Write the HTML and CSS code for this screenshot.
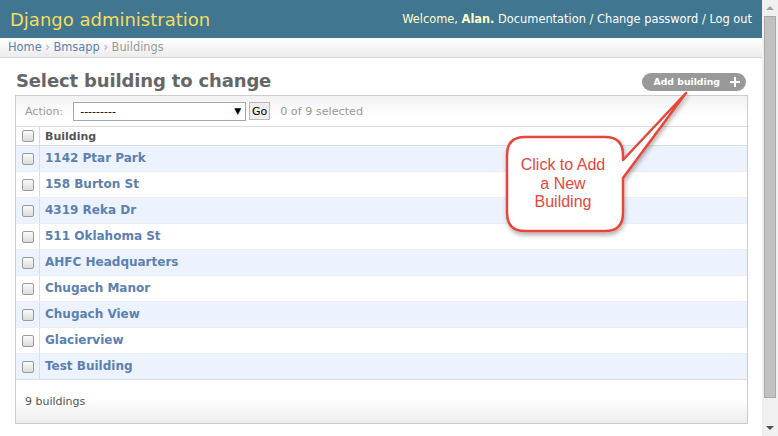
FILE: index.html
```html
<!DOCTYPE html>
<html>
<head>
<meta charset="utf-8">
<link rel="stylesheet" href="styles.css">
</head>
<body>
<div class="page">
  <div class="header">
    <div class="branding">Django administration</div>
    <div class="user-tools">Welcome, <strong>Alan.</strong> <a>Documentation</a> / <a>Change password</a> / <a>Log out</a></div>
  </div>
  <div class="breadcrumbs"><a>Home</a> <span class="sep">›</span> <a>Bmsapp</a> <span class="sep">›</span> <span class="cur">Buildings</span></div>
  <div class="content">
    <div class="title-row">
      <h1>Select building to change</h1>
      <a class="addlink">Add building <span class="plus"></span></a>
    </div>
    <div class="module">
      <div class="actions">
        <span class="label">Action:</span>
        <span class="select"><span>---------</span><span class="arrow">▼</span></span>
        <span class="go">Go</span>
        <span class="counter">0 of 9 selected</span>
      </div>
      <div class="row head"><div class="cb"><span class="check"></span></div><div class="name">Building</div></div>
      <div class="row odd"><div class="cb"><span class="check"></span></div><div class="name"><a>1142 Ptar Park</a></div></div>
      <div class="row"><div class="cb"><span class="check"></span></div><div class="name"><a>158 Burton St</a></div></div>
      <div class="row odd"><div class="cb"><span class="check"></span></div><div class="name"><a>4319 Reka Dr</a></div></div>
      <div class="row"><div class="cb"><span class="check"></span></div><div class="name"><a>511 Oklahoma St</a></div></div>
      <div class="row odd"><div class="cb"><span class="check"></span></div><div class="name"><a>AHFC Headquarters</a></div></div>
      <div class="row"><div class="cb"><span class="check"></span></div><div class="name"><a>Chugach Manor</a></div></div>
      <div class="row odd"><div class="cb"><span class="check"></span></div><div class="name"><a>Chugach View</a></div></div>
      <div class="row"><div class="cb"><span class="check"></span></div><div class="name"><a>Glacierview</a></div></div>
      <div class="row odd last"><div class="cb"><span class="check"></span></div><div class="name"><a>Test Building</a></div></div>
      <div class="paginator">9 buildings</div>
    </div>
  </div>
  <div class="callout">
    <svg class="bubble" width="200" height="160" viewBox="0 0 200 160">
      <defs>
        <filter id="sh" x="-20%" y="-20%" width="140%" height="140%">
          <feDropShadow dx="1" dy="3" stdDeviation="2" flood-color="#000" flood-opacity="0.3"/>
        </filter>
      </defs>
      <path filter="url(#sh)" d="M25 49 H105 Q123 49 123 67 V72 L186 5 L123 90 V125 Q123 143 105 143 H25 Q7 143 7 125 V67 Q7 49 25 49 Z" fill="#fff" stroke="#e5473d" stroke-width="2.5" stroke-linejoin="round"/>
    </svg>
    <div class="callout-text">Click to Add<br>a New<br>Building</div>
  </div>
</div>
<div class="scrollbar">
  <span class="arr up"></span>
  <span class="thumb"></span>
  <span class="arr down"></span>
</div>
</body>
</html>
```
FILE: styles.css
```css
html, body { margin: 0; padding: 0; }
body {
  display: flex;
  width: 778px;
  height: 436px;
  overflow: hidden;
  font-family: "DejaVu Sans", Verdana, sans-serif;
  background: #fff;
  color: #333;
}
.page { flex: 1; position: relative; min-width: 0; }
a { text-decoration: none; cursor: pointer; }

.header {
  height: 38px;
  background: #417690;
  display: flex;
  align-items: center;
  justify-content: space-between;
  padding: 0 10px;
}
.branding { color: #f5dd5d; font-size: 18px; }
.user-tools { color: #ffc; font-size: 11.4px; }
.user-tools strong { font-weight: bold; }
.user-tools a { color: #fff; }

.breadcrumbs {
  height: 19px;
  line-height: 19px;
  padding: 0 8px;
  font-size: 11.4px;
  background: linear-gradient(#fff, #ececec);
  border-bottom: 1px solid #d6d6d6;
  color: #999;
}
.breadcrumbs a { color: #5b80b2; }
.breadcrumbs .sep { color: #aaa; }
.breadcrumbs .cur { color: #999; }

.content { padding: 8px 14px 0 15px; }
.title-row {
  height: 29px;
  display: flex;
  align-items: center;
  justify-content: space-between;
}
h1 {
  margin: 0 0 0 1px;
  font-size: 18px;
  letter-spacing: -0.15px;
  font-weight: bold;
  color: #666;
}
.addlink {
  display: flex;
  align-items: center;
  height: 18px;
  margin-right: 2px;
  margin-top: 2px;
  padding: 0 6px 0 11px;
  border-radius: 9px;
  background: #999;
  color: #fff;
  font-size: 9.3px;
  font-weight: bold;
}
.plus {
  position: relative;
  width: 10px;
  height: 10px;
  margin-left: 10px;
}
.plus::before, .plus::after {
  content: "";
  position: absolute;
  background: #fff;
}
.plus::before { left: 4px; top: 0; width: 2px; height: 10px; }
.plus::after { left: 0; top: 4px; width: 10px; height: 2px; }

.module {
  border: 1px solid #ccc;
  height: 327px;
  display: flex;
  flex-direction: column;
}
.actions {
  height: 30px;
  display: flex;
  align-items: center;
  padding-left: 9px;
  font-size: 11px;
  background: linear-gradient(#f2f2f2, #fff 70%);
  border-bottom: 1px solid #ddd;
  color: #999;
}
.actions .label { margin-right: 10px; }
.select {
  width: 161px;
  height: 17px;
  border: 1px solid #a6a6a6;
  display: flex;
  align-items: center;
  justify-content: space-between;
  padding: 0 4px 0 6px;
  color: #000;
  font-size: 11px;
  background: #fff;
}
.select .arrow { font-size: 9px; }
.go {
  margin-left: 3px;
  height: 16px;
  width: 19px;
  border: 1px solid #bbb;
  background: #eee;
  color: #000;
  display: flex;
  align-items: center;
  justify-content: center;
  font-size: 11px;
}
.counter { margin-left: 10px; font-size: 11.2px; }

.row {
  display: flex;
  height: 25px;
  border-bottom: 1px solid #eee;
  background: #fff;
}
.row.odd { background: #edf3fe; }
.row.head { height: 18px; border-bottom: 1px solid #ddd; background: #fff; }
.row.last { border-bottom: 1px solid #ddd; }
.cb {
  width: 23px;
  border-right: 1px solid #ddd;
  display: flex;
  align-items: center;
  justify-content: center;
}
.check {
  width: 10px;
  height: 10px;
  border: 1px solid #9a9a9a;
  border-radius: 2px;
  background: linear-gradient(#fafafa, #dcdcdc);
}
.name {
  flex: 1;
  display: flex;
  align-items: center;
  padding-left: 5px;
  padding-bottom: 2px;
  font-size: 12px;
  font-weight: bold;
}
.head .name { font-size: 11px; color: #555; padding-bottom: 0; }
.name a { color: #5b80b2; }
.paginator {
  flex: 1;
  display: flex;
  align-items: center;
  padding-left: 9px;
  font-size: 11px;
  color: #555;
  background: linear-gradient(#fff 45%, #ececec);
}

.callout {
  position: absolute;
  left: 500px;
  top: 88px;
  width: 200px;
  height: 160px;
}
.bubble { position: absolute; left: 0; top: 0; }
.callout-text {
  position: absolute;
  left: 5px;
  top: 68px;
  width: 116px;
  text-align: center;
  font-family: "Liberation Sans", Arial, sans-serif;
  font-size: 16px;
  line-height: 18.5px;
  color: #e5473d;
}

.scrollbar {
  width: 16px;
  height: 436px;
  background: #f0f0f0;
  display: flex;
  flex-direction: column;
  align-items: center;
}
.arr { width: 0; height: 0; border-left: 4px solid transparent; border-right: 4px solid transparent; }
.arr.up { margin-top: 6px; border-bottom: 4px solid #a3a3a3; }
.arr.down { margin-top: 28px; border-top: 4px solid #505050; }
.thumb {
  margin-top: 6px;
  width: 10px;
  height: 380px;
  background: #c1c1c1;
  border: 1px solid #a9a9a9;
}
```
